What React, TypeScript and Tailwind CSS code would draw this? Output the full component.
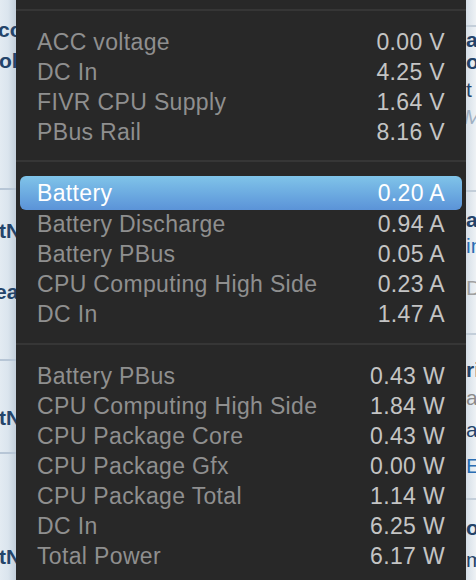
import React from 'react';

type Row = { label: string; value: string; active?: boolean };

const VOLTAGES: Row[] = [
  { label: 'ACC voltage', value: '0.00 V' },
  { label: 'DC In', value: '4.25 V' },
  { label: 'FIVR CPU Supply', value: '1.64 V' },
  { label: 'PBus Rail', value: '8.16 V' },
];

const CURRENTS: Row[] = [
  { label: 'Battery', value: '0.20 A', active: true },
  { label: 'Battery Discharge', value: '0.94 A' },
  { label: 'Battery PBus', value: '0.05 A' },
  { label: 'CPU Computing High Side', value: '0.23 A' },
  { label: 'DC In', value: '1.47 A' },
];

const POWER: Row[] = [
  { label: 'Battery PBus', value: '0.43 W' },
  { label: 'CPU Computing High Side', value: '1.84 W' },
  { label: 'CPU Package Core', value: '0.43 W' },
  { label: 'CPU Package Gfx', value: '0.00 W' },
  { label: 'CPU Package Total', value: '1.14 W' },
  { label: 'DC In', value: '6.25 W' },
  { label: 'Total Power', value: '6.17 W' },
];

const MenuRow = ({ row }: { row: Row }) => {
  if (row.active) {
    return (
      <div className="mx-[4px] -mt-[3px] -mb-[1px] h-[34px] px-[17px] flex items-center justify-between rounded-[6px] bg-gradient-to-b from-[#80c4e9] to-[#5b93d8] text-white">
        <span>{row.label}</span>
        <span>{row.value}</span>
      </div>
    );
  }
  return (
    <div className="h-[30px] px-[21px] flex items-center justify-between">
      <span className="text-[#8f8f8f]">{row.label}</span>
      <span className="text-[#c4c4c4]">{row.value}</span>
    </div>
  );
};

const Separator = () => <div className="h-[2px] bg-[#363636]" />;

export default function App() {
  return (
    <div className="w-[476px] h-[580px] overflow-hidden flex" style={{ fontFamily: '"Liberation Sans", Arial, sans-serif' }}>
      {/* page behind, left edge */}
      <div className="w-[16px] h-full overflow-hidden bg-gradient-to-r from-[#e3ebf2] via-[#dbe5ee] to-[#c3cfdb] flex flex-col text-[21px] font-bold text-[#24446a] whitespace-nowrap">
        <div className="mt-[18px] h-[24px] leading-[24px] -ml-[2px]">co</div>
        <div className="mt-[7px] h-[24px] leading-[24px] -ml-[1px]">ol</div>
        <div className="mt-[115px] h-[2px] bg-[#b7c6d6]" />
        <div className="mt-[29px] h-[24px] leading-[24px] -ml-[1px]">tN</div>
        <div className="mt-[37px] h-[24px] leading-[24px] -ml-[5px]">ea</div>
        <div className="mt-[55px] h-[2px] bg-[#b7c6d6]" />
        <div className="mt-[45px] h-[24px] leading-[24px] -ml-[1px]">tN</div>
        <div className="mt-[22px] h-[2px] bg-[#b7c6d6]" />
        <div className="mt-[91px] h-[24px] leading-[24px] -ml-[1px]">tN</div>
      </div>

      {/* menu panel */}
      <div className="w-[450px] h-full bg-[#282828] flex flex-col text-[23px] tracking-[0.35px] leading-[30px]">
        <div className="h-[9px]" />
        <Separator />
        <div className="pt-[16px] pb-[13px]">
          {VOLTAGES.map((r, i) => (
            <MenuRow key={i} row={r} />
          ))}
        </div>
        <Separator />
        <div className="pt-[17px] pb-[14px]">
          {CURRENTS.map((r, i) => (
            <MenuRow key={i} row={r} />
          ))}
        </div>
        <Separator />
        <div className="pt-[16px]">
          {POWER.map((r, i) => (
            <MenuRow key={i} row={r} />
          ))}
        </div>
      </div>

      {/* page behind, right edge */}
      <div className="w-[10px] h-full overflow-hidden bg-gradient-to-r from-[#d6dfe8] to-[#eef2f5] flex flex-col text-[21px] whitespace-nowrap">
        <div className="mt-[25px] h-[2px] bg-[#c3ced9]" />
        <div className="mt-[2px] h-[22px] leading-[22px] font-bold text-[#24446a]">a</div>
        <div className="h-[22px] leading-[22px] font-bold text-[#24446a]">o</div>
        <div className="mt-[6px] h-[22px] leading-[22px] text-[#24446a]">t</div>
        <div className="mt-[5px] h-[22px] leading-[22px] italic text-[#9fb0c2] -ml-[2px]">M</div>
        <div className="mt-[62px] h-[2px] bg-[#c3ced9]" />
        <div className="mt-[17px] h-[22px] leading-[22px] font-bold text-[#24446a]">al</div>
        <div className="mt-[4px] h-[22px] leading-[22px] text-[#2a6db3]">in</div>
        <div className="mt-[20px] h-[22px] leading-[22px] text-[#a0a0a0]">D</div>
        <div className="mt-[34px] h-[2px] bg-[#c3ced9]" />
        <div className="mt-[24px] h-[22px] leading-[22px] font-bold text-[#24446a]">ri</div>
        <div className="mt-[6px] h-[22px] leading-[22px] text-[#8a8a8a]">ar</div>
        <div className="mt-[10px] h-[22px] leading-[22px] text-[#24446a]">ac</div>
        <div className="mt-[14px] h-[22px] leading-[22px] text-[#2a6db3]">E</div>
        <div className="mt-[21px] h-[2px] bg-[#c3ced9]" />
        <div className="mt-[17px] h-[22px] leading-[22px] font-bold text-[#24446a]">o</div>
        <div className="mt-[10px] h-[22px] leading-[22px] text-[#24446a]">m</div>
      </div>
    </div>
  );
}
